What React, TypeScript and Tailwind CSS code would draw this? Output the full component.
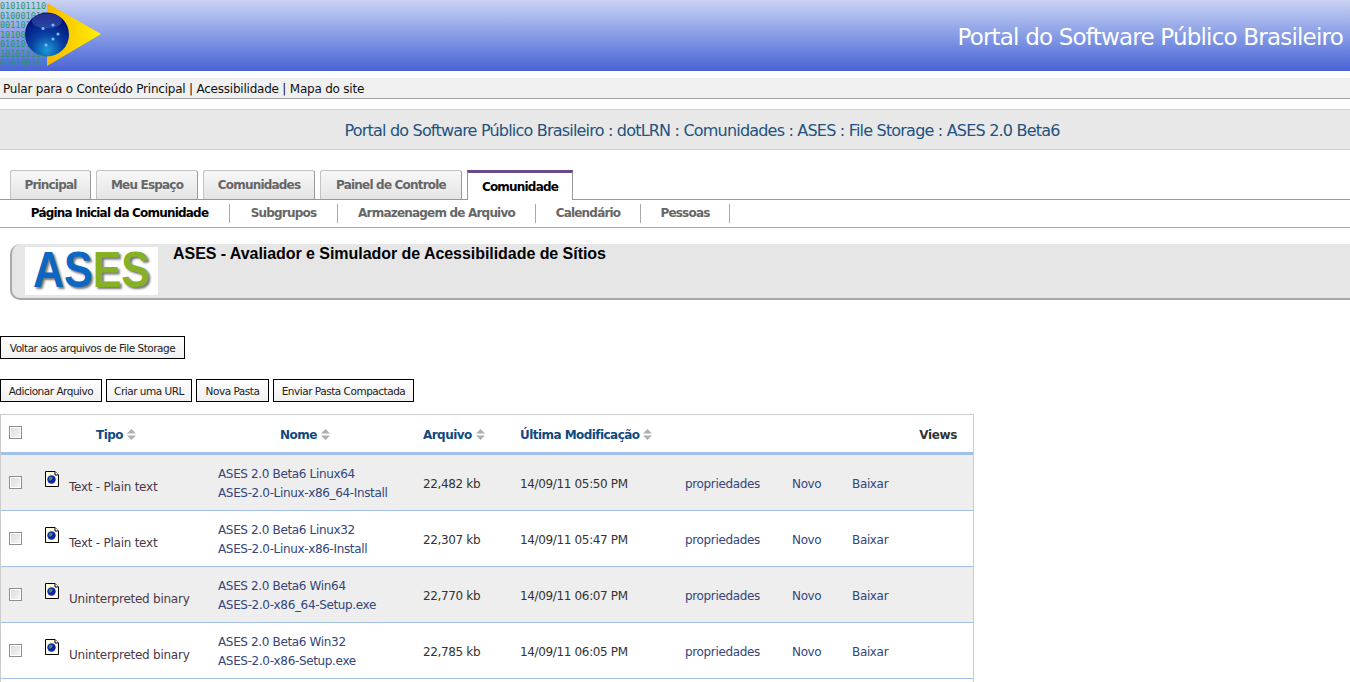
import { ReactNode } from "react";

const tabs = [
  { label: "Principal", width: "w-[81px]" },
  { label: "Meu Espaço", width: "w-[102px]" },
  { label: "Comunidades", width: "w-[112px]" },
  { label: "Painel de Controle", width: "w-[142px]" },
];
const subnav = [
  { label: "Página Inicial da Comunidade", width: "w-[220px]" },
  { label: "Subgrupos", width: "w-[108px]" },
  { label: "Armazenagem de Arquivo", width: "w-[198px]" },
  { label: "Calendário", width: "w-[105px]" },
  { label: "Pessoas", width: "w-[89px]" },
];
const binary = ["010101110", "010001010", "001101101", "101001011", "010101010", "101010101", "010100101"];

const rows = [
  { tipo: "Text - Plain text", nome: "ASES 2.0 Beta6 Linux64", file: "ASES-2.0-Linux-x86_64-Install", size: "22,482 kb", date: "14/09/11 05:50 PM" },
  { tipo: "Text - Plain text", nome: "ASES 2.0 Beta6 Linux32", file: "ASES-2.0-Linux-x86-Install", size: "22,307 kb", date: "14/09/11 05:47 PM" },
  { tipo: "Uninterpreted binary", nome: "ASES 2.0 Beta6 Win64", file: "ASES-2.0-x86_64-Setup.exe", size: "22,770 kb", date: "14/09/11 06:07 PM" },
  { tipo: "Uninterpreted binary", nome: "ASES 2.0 Beta6 Win32", file: "ASES-2.0-x86-Setup.exe", size: "22,785 kb", date: "14/09/11 06:05 PM" },
];

function Logo() {
  return (
    <svg width="102" height="68" viewBox="0 0 102 68">
      <defs>
        <radialGradient id="globe" cx="50%" cy="85%" r="75%">
          <stop offset="0%" stopColor="#1a9ad8" />
          <stop offset="50%" stopColor="#0a3da0" />
          <stop offset="100%" stopColor="#00107a" />
        </radialGradient>
        <linearGradient id="gold" x1="0" y1="0" x2="1" y2="0">
          <stop offset="0%" stopColor="#f8b800" />
          <stop offset="100%" stopColor="#fff000" />
        </linearGradient>
      </defs>
      <polygon points="47,3 101,34 47,66" fill="url(#gold)" />
      <circle cx="47" cy="34.5" r="22" fill="url(#globe)" />
      <ellipse cx="47" cy="21" rx="15" ry="7.5" fill="#6a78c8" opacity="0.35" />
      {[[43, 28.5], [53, 25], [58, 34], [53, 39], [46, 45]].map(([x, y]) => (
        <circle key={x} cx={x} cy={y} r="1.6" fill="#6fc0e8" />
      ))}
    </svg>
  );
}

function DocIcon() {
  return (
    <svg width="14" height="16" viewBox="0 0 14 16" className="shrink-0">
      <path d="M0.5 0.5H10L13.5 4V15.5H0.5Z" fill="#fffbe0" stroke="#000" />
      <path d="M10 0.5V4H13.5" fill="#fff" stroke="#000" />
      <circle cx="6.5" cy="8.5" r="4.2" fill="#1420b0" />
      <path d="M4 6.5C5.5 5 7.5 5.5 7.5 7C7.5 8.5 6 9 5 10C4 9.5 3.5 8 4 6.5Z" fill="#2f9a58" />
    </svg>
  );
}

function SortArrows() {
  return (
    <svg width="9" height="11" viewBox="0 0 9 11" className="ml-[4px]">
      <path d="M4.5 0L9 4.5H0Z M0 6.5H9L4.5 11Z" fill="#b0b0b0" />
    </svg>
  );
}

function Check() {
  return <span className="block w-[13px] h-[13px] border border-[#8f8f8f] bg-[linear-gradient(135deg,#dcdcdc,#f6f6f6)] outline outline-white -outline-offset-2" />;
}

function Btn({ children, width }: { children: ReactNode; width: string }) {
  return <span className={`${width} h-[23px] pt-[2px] flex items-center justify-center border border-black bg-gradient-to-b from-white to-[#f0f0f0] text-[10.5px] tracking-[-0.48px] text-[#222] whitespace-nowrap`}>{children}</span>;
}

function Th({ children }: { children: ReactNode }) {
  return <div className="mt-[2px] flex items-center font-bold text-[#104a80] tracking-[-0.55px]">{children}<SortArrows /></div>;
}

export default function App() {
  return (
    <div className="h-screen overflow-hidden bg-white font-['DejaVu_Sans',sans-serif] text-[#333]">
      <div className="relative h-[71px] pt-[3px] bg-gradient-to-b from-[#cbd2f2] to-[#4a63d5] flex items-center justify-end pr-[7px]">
        <div className="absolute left-0 top-[2px] font-['DejaVu_Sans_Mono',monospace] text-[8.5px] leading-[9.5px] text-[#1f9a5c]">
          {binary.map((b, i) => <div key={i}>{b}</div>)}
        </div>
        <div className="absolute left-0 top-0"><Logo /></div>
        <span className="text-white text-[23px] tracking-[-0.8px]">Portal do Software Público Brasileiro</span>
      </div>
      <div className="mt-[7px] h-[21px] pt-[2px] bg-[#f0f0f0] border-b border-[#a0a0a0] flex items-center pl-[3px] text-[12px] tracking-[-0.22px] text-[#111]">
        Pular para o Conteúdo Principal | Acessibilidade | Mapa do site
      </div>
      <div className="mt-[10px] h-[41px] pt-[2px] pl-[54px] bg-[#e8e8e8] border-y border-[#cfcfcf] flex items-center justify-center text-[16px] tracking-[-0.8px] text-[#22527f]">
        Portal do Software Público Brasileiro : dotLRN : Comunidades : ASES : File Storage : ASES 2.0 Beta6
      </div>

      <div className="mt-[20px] h-[30px] flex items-end gap-[5px] pl-[10px] border-b border-[#999] text-[12px] font-bold tracking-[-0.8px]">
        {tabs.map((t) => (
          <div key={t.label} className={`${t.width} h-[29px] flex items-center justify-center border border-b-0 border-[#c4c4c4] border-r-[#999] rounded-t-[3px] bg-gradient-to-b from-[#f8f8f8] to-[#e4e4e4] text-[#666] whitespace-nowrap`}>{t.label}</div>
        ))}
        <div className="relative -mb-px w-[106px] h-[30px] flex items-center justify-center border-t-[3px] border-t-[#694a8c] border-x border-x-[#999] bg-white text-black">Comunidade</div>
      </div>
      <div className="h-[28px] flex items-center pl-[10px] border-b border-[#aaa] text-[12px] font-bold tracking-[-0.8px] text-[#666]">
        {subnav.map((s, i) => (
          <div key={s.label} className={`${s.width} h-[19px] pb-[2px] flex items-center justify-center border-r border-[#aaa] whitespace-nowrap ${i === 0 ? "text-black" : ""}`}>{s.label}</div>
        ))}
      </div>

      <div className="mt-[16px] ml-[10px] h-[56px] bg-[#e6e6e6] border-l-2 border-b-2 border-[#a8a8a8] rounded-l-[10px] flex items-start pl-[13px]">
        <div className="mt-[3px] w-[133px] h-[48px] pb-[2px] bg-white flex items-center justify-center font-['Liberation_Sans',sans-serif] font-bold text-[43px] leading-none [text-shadow:2px_2px_2px_#777]">
          <div className="scale-y-[1.15]">
            <span className="text-[#0b66c4]">AS</span><span className="text-[#86b125]">ES</span>
          </div>
        </div>
        <span className="ml-[15px] -mt-[2px] font-['Liberation_Sans',sans-serif] font-bold text-[16px] tracking-[-0.05px] text-black">ASES - Avaliador e Simulador de Acessibilidade de Sítios</span>
      </div>

      <div className="mt-[36px] flex"><Btn width="w-[185px]">Voltar aos arquivos de File Storage</Btn></div>
      <div className="mt-[20px] flex gap-[4px]">
        <Btn width="w-[102px]">Adicionar Arquivo</Btn>
        <Btn width="w-[86px]">Criar uma URL</Btn>
        <Btn width="w-[73px]">Nova Pasta</Btn>
        <Btn width="w-[141px]">Enviar Pasta Compactada</Btn>
      </div>

      <div className="mt-[12px] w-[974px] border border-[#cccccc] text-[12px] tracking-[-0.35px]">
        <div className="h-[40px] grid grid-cols-[95px_184px_143px_97px_453px] items-center border-b-[3px] border-[#a3c0ec]">
          <div className="pl-[8px] -mt-[2px]"><Check /></div>
          <Th>Tipo</Th>
          <Th>Nome</Th>
          <Th>Arquivo</Th>
          <div className="flex items-center justify-between pr-[16px]">
            <Th>Última Modificação</Th>
            <span className="mt-[2px] font-bold text-[#333]">Views</span>
          </div>
        </div>
        {rows.map((r, i) => (
          <div key={r.nome} className={`h-[56px] pt-[2px] grid grid-cols-[44px_173px_205px_97px_165px_107px_60px_121px] items-center border-b border-[#a3c0ec] ${i % 2 === 0 ? "bg-[#eeeeee]" : "bg-white"}`}>
            <div className="pl-[8px] -mt-[3px]"><Check /></div>
            <div className="flex items-start gap-[10px] text-[#4a3a48]">
              <div><DocIcon /></div>
              <span className="mt-[7px] tracking-[-0.25px] whitespace-nowrap">{r.tipo}</span>
            </div>
            <div className="text-[#33457a] leading-[19px] whitespace-nowrap">
              <div>{r.nome}</div>
              <div>{r.file}</div>
            </div>
            <div className="text-[#333]">{r.size}</div>
            <div className="text-[#333]">{r.date}</div>
            <div className="text-[#33457a]">propriedades</div>
            <div className="text-[#33457a]">Novo</div>
            <div className="text-[#33457a]">Baixar</div>
          </div>
        ))}
        <div className="h-[10px]" />
      </div>
    </div>
  );
}
